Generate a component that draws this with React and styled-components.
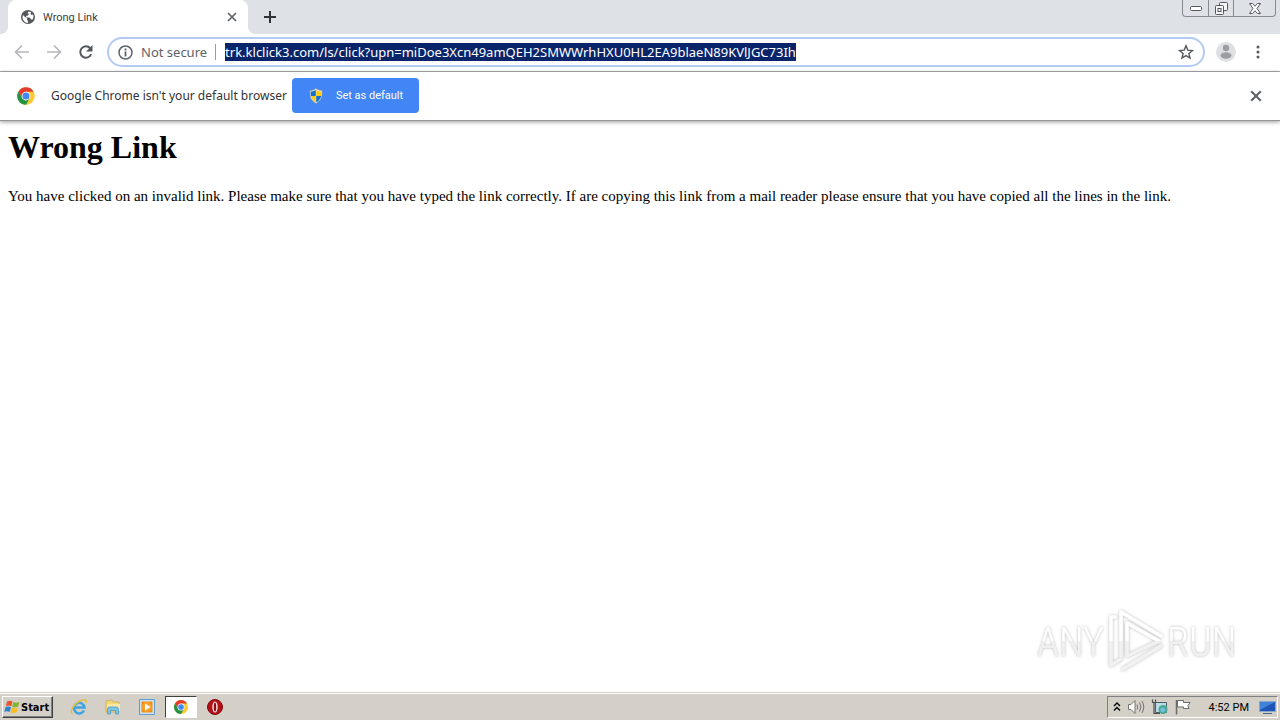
import React, { useEffect, useRef } from 'react';
import styled, { createGlobalStyle } from 'styled-components';

const GlobalStyle = createGlobalStyle`
  * {
    box-sizing: border-box;
  }
  body {
    margin: 0;
    background: #fff;
  }
`;

const boldFont = `'DejaVu Sans Condensed', 'Noto Sans', sans-serif`;
const uiFont = `'Noto Sans', 'Open Sans', sans-serif`;
const smallFont = `Roboto, 'Noto Sans', sans-serif`;

const Desktop = styled.div`
  min-height: 100vh;
  display: flex;
  flex-direction: column;
  font-family: ${uiFont};
`;

const TabStrip = styled.header`
  display: flex;
  align-items: stretch;
  height: 34px;
  padding-left: 8px;
  background: #dee1e6;
`;

const Tab = styled.div`
  position: relative;
  display: flex;
  align-items: center;
  gap: 8px;
  width: 240px;
  padding: 0 8px 0 13px;
  border-radius: 8px 8px 0 0;
  background: #fff;
  color: #3c4043;
  &::before,
  &::after {
    content: '';
    position: absolute;
    bottom: 0;
    width: 8px;
    height: 8px;
  }
  &::before {
    left: -8px;
    background: radial-gradient(circle at 0 0, transparent 8px, #fff 8px);
  }
  &::after {
    right: -8px;
    background: radial-gradient(circle at 100% 0, transparent 8px, #fff 8px);
  }
`;

const TabTitle = styled.span`
  flex: 1;
  font-family: ${smallFont};
  font-size: 11px;
`;

const IconButton = styled.button`
  display: flex;
  align-items: center;
  justify-content: center;
  flex: none;
  width: ${({ $size }) => $size || 16}px;
  height: ${({ $size }) => $size || 16}px;
  padding: 0;
  border: none;
  background: none;
  color: ${({ $color }) => $color || '#5f6368'};
`;

const NewTab = styled(IconButton)`
  align-self: center;
  margin-left: 14px;
`;

const WindowButtons = styled.div`
  display: flex;
  height: 17px;
  margin: 0 4px 0 auto;
  border: 1px solid #868a92;
  border-top: none;
  border-radius: 0 0 4px 4px;
`;

const WindowButton = styled.button`
  display: flex;
  align-items: center;
  justify-content: center;
  width: ${({ $wide }) => ($wide ? 42 : 25)}px;
  padding: 0;
  border: none;
  border-left: ${({ $first }) => ($first ? 'none' : '1px solid #868a92')};
  background: none;
`;

const Toolbar = styled.nav`
  display: flex;
  align-items: center;
  height: 38px;
  padding: 0 14px 1px;
  border-bottom: 1px solid #a9abae;
  background: #fff;
`;

const NavButtons = styled.div`
  display: flex;
  gap: 16px;
  margin-right: 13px;
`;

const AddressBar = styled.div`
  flex: 1;
  display: flex;
  align-items: center;
  height: 30px;
  padding: 0 9px;
  border: 2px solid #b3cbf3;
  border-radius: 15px;
  background: #fff;
`;

const Security = styled.label`
  margin: 0 8px 0 8px;
  color: #5f6368;
  font-size: 13px;
  white-space: nowrap;
`;

const Divider = styled.span`
  width: 1px;
  height: 16px;
  margin-right: 9px;
  background: #9a9da1;
`;

const UrlInput = styled.input`
  flex: 1;
  min-width: 0;
  padding: 0;
  border: none;
  outline: none;
  font-family: ${uiFont};
  font-size: 13px;
  &::selection {
    background: #0a246a;
    color: #fff;
  }
`;

const Avatar = styled(IconButton)`
  margin: 0 14px 0 11px;
`;

const InfoBar = styled.section`
  position: relative;
  display: flex;
  align-items: center;
  height: 49px;
  padding: 0 16px 1px;
  border-bottom: 1px solid #959595;
  box-shadow: 0 1px 4px rgba(0, 0, 0, 0.4);
  background: #fff;
`;

const InfoText = styled.span`
  margin: 0 5px 0 15px;
  color: #333;
  font-size: 12px;
  white-space: nowrap;
`;

const DefaultButton = styled.button`
  display: flex;
  align-items: center;
  gap: 12px;
  height: 35px;
  padding: 0 16px;
  border: none;
  border-radius: 4px;
  background: #4285f4;
  color: #fff;
  font-family: ${smallFont};
  font-size: 11px;
  white-space: nowrap;
`;

const CloseInfo = styled(IconButton)`
  margin-left: auto;
`;

const Page = styled.main`
  flex: 1;
  display: flex;
  flex-direction: column;
  padding: 8px;
  color: #000;
  font-family: 'Liberation Serif', serif;
  font-size: 15px;
`;

const Heading = styled.h1`
  margin: 0 0 21px;
  font-size: 32px;
  line-height: 37px;
`;

const Paragraph = styled.p`
  margin: 0;
  line-height: 18px;
`;

const Watermark = styled.div`
  display: flex;
  align-items: center;
  align-self: flex-end;
  margin: auto 36px 10px 0;
`;

const Taskbar = styled.footer`
  display: flex;
  align-items: center;
  height: 28px;
  padding: 2px 2px 1px;
  border-top: 1px solid #d4d0c8;
  box-shadow: inset 0 1px 0 #fff;
  background: #d4d0c8;
`;

const StartButton = styled.button`
  display: flex;
  align-items: center;
  height: 22px;
  margin-right: 10px;
  padding: 0 3px 0 1px;
  border: 1px solid;
  border-color: #fff #404040 #404040 #fff;
  box-shadow: inset -1px -1px 0 #808080;
  background: #d4d0c8;
  color: #000;
  font-family: ${boldFont};
  font-size: 11px;
  font-weight: 700;
`;

const TaskButton = styled.button`
  display: flex;
  align-items: center;
  justify-content: center;
  width: 32px;
  height: 22px;
  margin-right: 2px;
  padding: 0;
  border: 1px solid;
  border-color: ${({ $active }) => ($active ? '#404040 #fff #fff #404040' : 'transparent')};
  background: ${({ $active }) => ($active ? '#fff' : 'none')};
`;

const Tray = styled.div`
  display: flex;
  align-items: center;
  gap: 6px;
  height: 22px;
  margin-left: auto;
  padding: 0 1px 0 5px;
  border: 1px solid;
  border-color: #808080 #fff #fff #808080;
`;

const Clock = styled.time`
  margin: 0 4px 0 11px;
  font-family: ${smallFont};
  font-size: 11px;
  white-space: nowrap;
`;

const GlobeIcon = () => (
  <svg width="14" height="14" viewBox="0 0 14 14">
    <circle cx="7" cy="7" r="7" fill="#54585d" />
    <path d="M2 5l2 2 2 1v2l1 1v2C4 13 1.500 10 1.500 7zM7.500 1.500L6.500 3l1.500 1-1 1.500-2 .5.500 1.500h3l1.500 1.500 1 1C12.500 8.500 13 6 12 4.500l-1.500.5-1-1L10 2z" fill="#fff" />
  </svg>
);

const CrossIcon = ({ size = 10, width = 2 }) => (
  <svg width={size} height={size} viewBox="0 0 10 10" stroke="currentColor" strokeWidth={width}>
    <path d="M1 1l8 8M9 1l-8 8" />
  </svg>
);

const PlusIcon = () => (
  <svg width="12" height="12" viewBox="0 0 12 12" stroke="currentColor" strokeWidth="2">
    <path d="M6 0v12M0 6h12" />
  </svg>
);

const ArrowIcon = ({ forward }) => (
  <svg width="16" height="16" viewBox="0 0 16 16" fill="none" stroke="currentColor" strokeWidth="1.700">
    <path d={forward ? 'M1 8h13M8 1.500L14.500 8 8 14.500' : 'M15 8H2M8 1.500L1.500 8 8 14.500'} />
  </svg>
);

const ReloadIcon = () => (
  <svg width="16" height="16" viewBox="0 0 16 16">
    <path d="M13.200 10.200A5.700 5.700 0 1 1 12.200 4.100L13 5" fill="none" stroke="#54585d" strokeWidth="2" />
    <path d="M14.500 1v6.500H8z" fill="#54585d" />
  </svg>
);

const InfoIcon = () => (
  <svg width="15" height="15" viewBox="0 0 15 15">
    <circle cx="7.500" cy="7.500" r="6.500" fill="none" stroke="#5f6368" strokeWidth="1.500" />
    <path d="M7.500 3.500v2M7.500 6.500v5" stroke="#5f6368" strokeWidth="1.800" />
  </svg>
);

const StarIcon = () => (
  <svg width="16" height="16" viewBox="0 0 16 16">
    <path d="M8 1.800l1.800 4.300 4.700.4-3.600 3 1.100 4.600L8 11.600l-4 2.500 1.100-4.600-3.600-3 4.700-.4z" fill="none" stroke="#54585d" strokeWidth="1.400" />
  </svg>
);

const PersonIcon = () => (
  <svg width="20" height="20" viewBox="0 0 20 20">
    <circle cx="10" cy="10" r="10" fill="#dfe0e2" />
    <circle cx="10" cy="6" r="3.200" fill="#9b9da0" />
    <ellipse cx="10" cy="13.500" rx="5.500" ry="3.200" fill="#9b9da0" />
  </svg>
);

const MenuIcon = () => (
  <svg width="4" height="14" viewBox="0 0 4 14" fill="#54585d">
    <circle cx="2" cy="2" r="1.500" />
    <circle cx="2" cy="7" r="1.500" />
    <circle cx="2" cy="12" r="1.500" />
  </svg>
);

const ChromeIcon = ({ size = 18 }) => (
  <svg width={size} height={size} viewBox="0 0 48 48">
    <circle cx="24" cy="24" r="21" fill="#fcc934" />
    <path d="M5.800 13.500A21 21 0 0 1 42.200 13.500H24L15 29.200z" fill="#e33b2e" />
    <path d="M5.800 13.500A21 21 0 0 0 24 45L33 29.200 24 34.500 15 29.200z" fill="#229342" />
    <circle cx="24" cy="24" r="10.500" fill="#fff" />
    <circle cx="24" cy="24" r="8.500" fill="#4285f4" />
  </svg>
);

const ShieldIcon = () => (
  <svg width="16" height="16" viewBox="0 0 16 16">
    <path d="M8 .5c2 1.500 4 2 6 2 .5 6-1 10-6 13-5-3-6.500-7-6-13 2 0 4-.5 6-2z" fill="#e8edf2" stroke="#8b9bab" strokeWidth=".6" />
    <path d="M7.800 2v6H3C2.600 6.500 2.600 5 2.700 3.600 5 3.500 6.500 2.900 7.800 2zM8.200 8h4.900c-.6 2.700-2 4.800-4.900 6.500z" fill="#1670c9" />
    <path d="M8.200 2v6h4.900c.4-1.500.4-3 .2-4.400C11 3.500 9.500 2.900 8.200 2zM7.800 8H3c.5 2.700 1.900 4.800 4.800 6.500z" fill="#fbcb18" />
  </svg>
);

const AnyRunLogo = () => (
  <svg width="204" height="68" viewBox="0 0 204 68">
    <defs>
      <filter id="soft" x="-10%" y="-20%" width="120%" height="140%">
        <feDropShadow dx="0" dy="0" stdDeviation="1.600" floodColor="#666" floodOpacity=".5" />
      </filter>
      <linearGradient id="fade" x1="0" y1="0" x2="0" y2="68" gradientUnits="userSpaceOnUse">
        <stop offset=".52" stopColor="#fff" />
        <stop offset=".52" stopColor="#f1f1f1" />
      </linearGradient>
    </defs>
    <g filter="url(#soft)">
      <g fill="none" stroke="url(#fade)" strokeWidth="3.500" strokeLinejoin="round" strokeLinecap="round">
        <path d="M89 50V6l40 24" />
        <path d="M95 50V17l32 18z" />
        <path d="M83 11h-4v48l10-6" />
        <path d="M91 63l38-23" />
      </g>
      <g fill="url(#fade)" fontFamily="'Roboto Condensed', 'Liberation Sans Narrow', Roboto, sans-serif" fontSize="40" fontWeight="300">
        <text x="5" y="50">ANY</text>
        <text x="135" y="50">RUN</text>
      </g>
    </g>
  </svg>
);

const WindowsIcon = () => (
  <svg width="17" height="16" viewBox="0 0 17 16">
    <path d="M3 2.500c2-1.200 4-1 5.500 0L7.200 7.300c-1.500-1-3.500-1-5.400-.1z" fill="#e8562a" />
    <path d="M9.300 3c2 1 4 1 6.200-.2l-1.300 4.700c-2 1-4 1-6 .2z" fill="#83b62e" />
    <path d="M1.500 8.200c2-1 4-.9 5.500 0l-1.300 4.800c-1.500-1-3.500-1-5.400-.2z" fill="#2b83d0" />
    <path d="M7.900 8.600c2 1 4 1 6.100 0l-1.400 4.700c-2 1-4 1-6 .2z" fill="#f7bd21" />
  </svg>
);

const IeIcon = () => (
  <svg width="18" height="18" viewBox="0 0 18 18" fill="none">
    <path d="M14 12.500A5.300 5.300 0 1 1 14.500 9.500H5" stroke="#3aa5e2" strokeWidth="2.500" />
    <path d="M2.500 16C-1.500 14 4 5.500 11 2.500c4-1.600 6-.5 5 2.500" stroke="#e5bd4c" strokeWidth="1.500" />
  </svg>
);

const FolderIcon = () => (
  <svg width="18" height="18" viewBox="0 0 18 18">
    <path d="M2 3l6-1 1 2h6v10H2z" fill="#f3d878" stroke="#caa647" strokeWidth=".7" />
    <path d="M3 6h13v7H3z" fill="#fae9a6" />
    <path d="M3.500 16v-5q0-2 2-2h7q2 0 2 2v5h-3v-3.500h-5V16z" fill="#7cc4e6" stroke="#4394bf" strokeWidth=".7" />
  </svg>
);

const PlayerIcon = () => (
  <svg width="16" height="16" viewBox="0 0 16 16">
    <path d="M.5.500h15v15H.5z" fill="#cde5f7" stroke="#5b9dce" />
    <path d="M2.500 2.500h11v11h-11z" fill="#f18a10" />
    <circle cx="8" cy="8" r="5" fill="#f6a02c" />
    <path d="M6 4.500L11.500 8 6 11.500z" fill="#fff" />
  </svg>
);

const OperaIcon = () => (
  <svg width="16" height="16" viewBox="0 0 16 16">
    <circle cx="8" cy="8" r="7.500" fill="#b70f17" stroke="#7b0a0e" />
    <ellipse cx="8" cy="8" rx="2.700" ry="5.500" fill="#f4e6e4" />
    <ellipse cx="8" cy="8" rx="1.200" ry="4.500" fill="#8c0d12" />
  </svg>
);

const ChevronsIcon = () => (
  <svg width="8" height="10" viewBox="0 0 8 10" fill="none" stroke="#000" strokeWidth="1.400">
    <path d="M1 4l3-3 3 3M1 8.500l3-3 3 3" />
  </svg>
);

const SpeakerIcon = () => (
  <svg width="18" height="16" viewBox="0 0 18 16" fill="none" stroke="#77736d">
    <path d="M1.500 5.500H4L8 1.500v13l-4-4H1.500z" fill="#fff" />
    <path d="M10 5.500q1.500 2.500 0 5M12.500 3.500q3 4.500 0 9M15 2q3.500 6 0 12" />
  </svg>
);

const NetworkIcon = () => (
  <svg width="18" height="16" viewBox="0 0 18 16">
    <path d="M4.500 3.500h11v10h-11z" fill="#b9dce6" stroke="#4c5e64" />
    <path d="M1.500.500v3h3v-3M3 3.500v11h6" fill="none" stroke="#4d4d4d" strokeWidth="1.200" />
    <circle cx="12" cy="10.500" r="4.500" fill="#4aa992" />
    <path d="M9 10q3-3 5 0t-4 3z" fill="#74bfe0" />
  </svg>
);

const FlagIcon = () => (
  <svg width="17" height="16" viewBox="0 0 17 16">
    <path d="M1.500 1v14.500" stroke="#6b6b6b" strokeWidth="1.500" />
    <path d="M2.500 1.500h6v2h6.500l-2 3 1 3H8.500v-1.500h-6z" fill="#fff" stroke="#6b6b6b" />
  </svg>
);

const DesktopIcon = () => (
  <svg width="17" height="15" viewBox="0 0 17 15">
    <path d="M.5 1.500h16v10H.5z" fill="#1c55b5" stroke="#89a6cb" />
    <path d="M1 2h15L1 10z" fill="#3f82d8" />
    <path d="M4 13.500h9" stroke="#44698e" />
  </svg>
);

const tasks = [
  { name: 'Internet Explorer', icon: <IeIcon /> },
  { name: 'Windows Explorer', icon: <FolderIcon /> },
  { name: 'Media Player', icon: <PlayerIcon /> },
  { name: 'Google Chrome', icon: <ChromeIcon size={16} />, active: true },
  { name: 'Opera', icon: <OperaIcon /> },
];

const App = () => {
  const urlRef = useRef(null);

  useEffect(() => {
    urlRef.current.focus();
    urlRef.current.select();
  }, []);

  return (
    <Desktop>
      <GlobalStyle />
      <TabStrip>
        <Tab>
          <GlobeIcon />
          <TabTitle>Wrong Link</TabTitle>
          <IconButton aria-label="Close tab">
            <CrossIcon width={1.7} />
          </IconButton>
        </Tab>
        <NewTab aria-label="New tab" $color="#303338">
          <PlusIcon />
        </NewTab>
        <WindowButtons>
          <WindowButton $first aria-label="Minimize">
            <svg width="12" height="5" viewBox="0 0 12 5">
              <rect x=".5" y=".5" width="11" height="4" rx="1" fill="#fff" stroke="#53565c" />
            </svg>
          </WindowButton>
          <WindowButton aria-label="Restore">
            <svg width="13" height="13" viewBox="0 0 13 13" fill="#f4f5f7" stroke="#53565c">
              <rect x="4.500" y=".5" width="8" height="8" rx="1" />
              <rect x=".5" y="3.500" width="8" height="9" rx="1" />
              <rect x="3" y="6.500" width="3" height="3" />
            </svg>
          </WindowButton>
          <WindowButton $wide aria-label="Close">
            <svg width="12" height="11" viewBox="0 0 12 11" fill="#fff" stroke="#53565c">
              <path d="M.5.500h3L6 3.200 8.500.500h3L8 5.500l3.500 5h-3L6 7.800 3.500 10.500h-3L4 5.500z" />
            </svg>
          </WindowButton>
        </WindowButtons>
      </TabStrip>

      <Toolbar>
        <NavButtons>
          <IconButton aria-label="Back" $color="#b5b7ba">
            <ArrowIcon />
          </IconButton>
          <IconButton aria-label="Forward" $color="#b5b7ba">
            <ArrowIcon forward />
          </IconButton>
          <IconButton aria-label="Reload">
            <ReloadIcon />
          </IconButton>
        </NavButtons>
        <AddressBar>
          <InfoIcon />
          <Security htmlFor="url">Not secure</Security>
          <Divider />
          <UrlInput
            id="url"
            ref={urlRef}
            spellCheck={false}
            defaultValue="trk.klclick3.com/ls/click?upn=miDoe3Xcn49amQEH2SMWWrhHXU0HL2EA9blaeN89KVlJGC73Ih"
          />
          <IconButton aria-label="Bookmark this page">
            <StarIcon />
          </IconButton>
        </AddressBar>
        <Avatar $size={20} aria-label="Profile">
          <PersonIcon />
        </Avatar>
        <IconButton aria-label="Menu">
          <MenuIcon />
        </IconButton>
      </Toolbar>

      <InfoBar>
        <ChromeIcon size={20} />
        <InfoText>Google Chrome isn't your default browser</InfoText>
        <DefaultButton>
          <ShieldIcon />
          Set as default
        </DefaultButton>
        <CloseInfo aria-label="Dismiss">
          <CrossIcon size={12} width={1.7} />
        </CloseInfo>
      </InfoBar>

      <Page>
        <Heading>Wrong Link</Heading>
        <Paragraph>
          You have clicked on an invalid link. Please make sure that you have typed the link correctly. If are
          copying this link from a mail reader please ensure that you have copied all the lines in the link.
        </Paragraph>
        <Watermark>
          <AnyRunLogo />
        </Watermark>
      </Page>

      <Taskbar>
        <StartButton>
          <WindowsIcon />
          Start
        </StartButton>
        {tasks.map(task => (
          <TaskButton key={task.name} aria-label={task.name} $active={task.active}>
            {task.icon}
          </TaskButton>
        ))}
        <Tray>
          <ChevronsIcon />
          <SpeakerIcon />
          <NetworkIcon />
          <FlagIcon />
          <Clock>4:52 PM</Clock>
          <DesktopIcon />
        </Tray>
      </Taskbar>
    </Desktop>
  );
};

export default App;
